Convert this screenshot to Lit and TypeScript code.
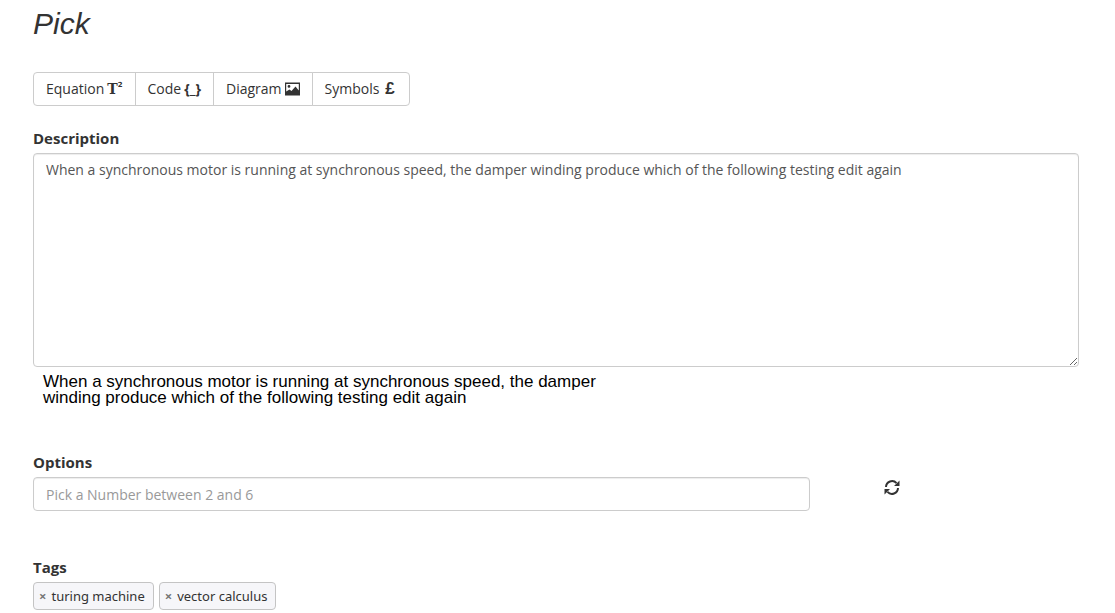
import { LitElement, html, css } from "lit";
import { customElement, property } from "lit/decorators.js";

const QUESTION =
  "When a synchronous motor is running at synchronous speed, the damper winding produce which of the following testing edit again";

@customElement("tag-chip")
class TagChip extends LitElement {
  @property() label = "";

  static styles = css`
    :host {
      display: flex;
      align-items: center;
      gap: 5px;
      height: 28px;
      padding: 0 8px 0 5px;
      border: 1px solid #c4c4c4;
      border-radius: 4px;
      background: #f6f6f9;
      color: #333;
      font: 13px/20px "Noto Sans", sans-serif;
    }
    .remove {
      border: 0;
      padding: 0;
      background: none;
      color: #777;
      font: bold 13px/14px "Noto Sans", sans-serif;
      cursor: pointer;
    }
  `;

  render() {
    return html`
      <button class="remove" aria-label="Remove ${this.label}">×</button>
      <span>${this.label}</span>
    `;
  }
}

@customElement("app-root")
class AppRoot extends LitElement {
  @property() question = QUESTION;

  static tags = ["turing machine", "vector calculus"];

  static styles = css`
    :host {
      display: block;
      background: #fff;
      color: #333;
      font: 14px/20px "Open Sans", "Noto Sans", sans-serif;
    }
    * {
      box-sizing: border-box;
    }
    main {
      padding: 7px 36px 0 33px;
    }
    h1 {
      margin: 0 0 32px;
      font: italic 30px/33px "Liberation Sans", Arial, sans-serif;
    }
    .toolbar {
      display: flex;
      margin-bottom: 22px;
    }
    .tool {
      display: flex;
      align-items: center;
      gap: 3px;
      height: 34px;
      margin: 0 0 0 -1px;
      padding: 0 12px;
      border: 1px solid #ccc;
      background: #fff;
      color: #333;
      font: inherit;
      cursor: pointer;
    }
    .tool:first-child {
      margin-left: 0;
      border-radius: 4px 0 0 4px;
    }
    .tool:last-child {
      border-radius: 0 4px 4px 0;
    }
    .tool svg {
      display: block;
    }
    .slab {
      display: flex;
      font: bold 14px/20px "DejaVu Serif", serif;
    }
    .slab sup {
      font: bold 7px/12px "DejaVu Sans", sans-serif;
    }
    .braces {
      font-weight: 700;
    }
    .pound {
      width: 15px;
      font: bold 17px/20px "Liberation Sans", sans-serif;
      text-align: center;
    }
    label,
    .label {
      display: block;
      margin-bottom: 5px;
      font: bold 15px/20px "Open Sans", sans-serif;
    }
    textarea,
    input {
      display: block;
      width: 100%;
      margin: 0;
      padding: 6px 12px;
      border: 1px solid #ccc;
      border-radius: 4px;
      background: #fff;
      box-shadow: inset 0 1px 1px rgba(0, 0, 0, 0.075);
      color: #555;
      font: inherit;
    }
    textarea {
      height: 214px;
      resize: vertical;
    }
    input {
      height: 34px;
    }
    input::placeholder {
      color: #999;
    }
    .preview {
      max-width: 580px;
      margin: 7px 0 46px 10px;
      color: #000;
      font: 17px/16px "Liberation Sans", Arial, sans-serif;
    }
    .options {
      display: flex;
      align-items: center;
      margin: 0 -15px 46px;
    }
    .field {
      width: 75%;
      padding: 0 15px;
    }
    .refresh {
      display: block;
      margin: 0 0 14px 59px;
      padding: 0;
      border: 0;
      background: none;
      color: #333;
      cursor: pointer;
    }
    .refresh svg {
      display: block;
    }
    .tags {
      display: flex;
      flex-wrap: wrap;
      gap: 5px;
    }
  `;

  render() {
    return html`
      <main>
        <h1>Pick</h1>
        <div class="toolbar">
          <button class="tool">
            Equation <span class="slab">T<sup>2</sup></span>
          </button>
          <button class="tool">Code <span class="braces">{_}</span></button>
          <button class="tool">
            Diagram
            <svg width="15" height="14" viewBox="0 0 15 14" aria-hidden="true">
              <path
                fill="#333"
                fill-rule="evenodd"
                d="M0 .5h15v13H0zM1.200 2v7.500L4.500 7.500l2 1.500L10.500 4.500l3.300 4V2zM4 3a1.400 1.400 0 1 1 0 2.800a1.400 1.400 0 1 1 0-2.800z"
              />
            </svg>
          </button>
          <button class="tool">Symbols <span class="pound">£</span></button>
        </div>

        <label for="description">Description</label>
        <textarea id="description" .value=${this.question}></textarea>
        <div class="preview">${this.question}</div>

        <label for="options">Options</label>
        <div class="options">
          <div class="field">
            <input id="options" placeholder="Pick a Number between 2 and 6" />
          </div>
          <button class="refresh" aria-label="Refresh">
            <svg width="16" height="16" viewBox="0 0 16 16" aria-hidden="true">
              <g fill="none" stroke="currentColor" stroke-width="2">
                <path d="M2 8A6 6 0 0 1 12.500 4.200" />
                <path d="M14 9A6 6 0 0 1 3.500 12.800" />
              </g>
              <path fill="currentColor" d="M15.500 1.500v5.500H10zM.5 15.500v-5.500h5.500z" />
            </svg>
          </button>
        </div>

        <div class="label">Tags</div>
        <div class="tags">
          ${AppRoot.tags.map((t) => html`<tag-chip label=${t}></tag-chip>`)}
        </div>
      </main>
    `;
  }
}
